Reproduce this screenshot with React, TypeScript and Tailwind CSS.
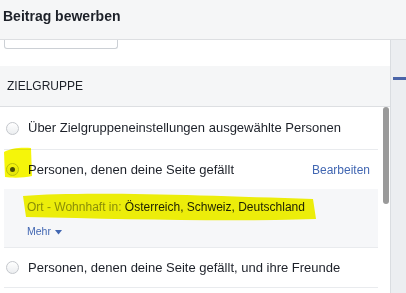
import React from "react";

function Radio({ checked = false }: { checked?: boolean }) {
  return (
    <span className="flex h-[13px] w-[13px] shrink-0 items-center justify-center rounded-full border border-[#c4c7cc] bg-gradient-to-b from-[#ffffff] to-[#eceef0]">
      {checked && <span className="h-[5px] w-[5px] rounded-full bg-[#4b4f56]" />}
    </span>
  );
}

function Highlight() {
  return (
    <svg
      className="pointer-events-none absolute left-0 top-0 mix-blend-multiply"
      width="406"
      height="293"
      viewBox="0 0 406 293"
    >
      <path
        d="M4 152 C10 148 22 147 31 148 L32 176 C24 178 12 178 5 177 Z"
        fill="#f5f50a"
      />
      <path
        d="M23 196 C80 191 200 195 313 199 L316 219 C230 222 120 219 26 217 Z"
        fill="#f5f50a"
      />
    </svg>
  );
}

export default function App() {
  return (
    <div className="relative h-[293px] w-[406px] overflow-hidden bg-white font-['Liberation_Sans',Arial,sans-serif] text-[#1d2129]">
      <div className="flex h-[40px] items-center border-b border-[#dddfe2] bg-[#f5f6f7] px-[3px] pb-[6px] text-[14px] font-bold">
        Beitrag bewerben
      </div>
      <div className="flex h-[253px]">
        <div className="relative w-[391px] border-r border-[#dadde1]">
          <div className="ml-[4px] h-[9px] w-[114px] rounded-b-[3px] border border-t-0 border-[#ccd0d5]" />
          <div className="mt-[17px] flex h-[41px] items-center border-b border-[#dddfe2] bg-[#f5f6f7] pl-[7px] text-[12px] text-[#1d2129]">
            ZIELGRUPPE
          </div>
          <div className="mx-[4px] w-[374px]">
            <div className="flex h-[43px] items-center gap-[9px] border-b border-[#e9ebee] pl-[2px] text-[13px]">
              <Radio />
              <span>Über Zielgruppeneinstellungen ausgewählte Personen</span>
            </div>
            <div className="flex h-[39px] items-center gap-[9px] pl-[2px] pr-[8px] text-[13px]">
              <Radio checked />
              <span className="flex-1">Personen, denen deine Seite gefällt</span>
              <span className="text-[12px] text-[#4267b2]">Bearbeiten</span>
            </div>
            <div className="flex h-[59px] flex-col justify-center gap-[8px] border-b border-[#e9ebee] bg-[#f6f7f9] pl-[23px] pt-[2px]">
              <div className="text-[12px]">
                <span className="text-[#90949c]">Ort - Wohnhaft in: </span>
                <span className="text-[#1d2129]">Österreich, Schweiz, Deutschland</span>
              </div>
              <div className="flex items-center gap-[4px] text-[10.5px] text-[#4267b2]">
                Mehr
                <svg width="7" height="5" viewBox="0 0 7 5">
                  <path d="M0 0 H7 L3.5 4.5 Z" fill="#4267b2" />
                </svg>
              </div>
            </div>
            <div className="flex h-[40px] items-center gap-[9px] border-b border-[#e9ebee] pl-[2px] text-[13px]">
              <Radio />
              <span>Personen, denen deine Seite gefällt, und ihre Freunde</span>
            </div>
          </div>
          <div className="absolute left-[383px] top-[67px] h-[97px] w-[6px] rounded-[3px] bg-[#9a9a9a]" />
        </div>
        <div className="flex-1 bg-[#eceef1] pt-[37px]">
          <div className="ml-[2px] h-[3px] bg-[#4a64a8]" />
        </div>
      </div>
      <Highlight />
    </div>
  );
}
